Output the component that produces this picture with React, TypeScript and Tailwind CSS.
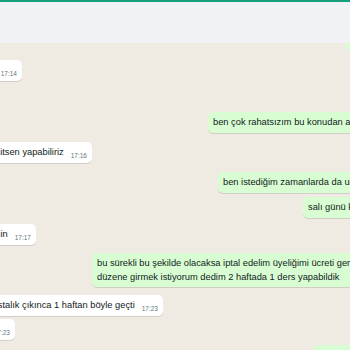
import React from "react";

const font = { fontFamily: '"Liberation Sans", Arial, sans-serif' };

function Time({ t }: { t: string }) {
  return (
    <span className="shrink-0 text-[6.5px] leading-[8px] text-[#667781] whitespace-nowrap">{t}</span>
  );
}

function In({ text, time, edge, mt }: { text?: string; time: string; edge: string; mt: string }) {
  return (
    <div className={`flex justify-end ${edge} ${mt}`}>
      <div className="flex shrink-0 items-end gap-[7px] whitespace-nowrap rounded-[5px] bg-white py-[3px] pl-[6px] pr-[5px] shadow-[0_1px_0.5px_rgba(11,20,26,0.13)]">
        {text ? <span className="text-[9.3px] leading-[15px] text-[#111b21]">{text}</span> : <span className="leading-[15px]">&nbsp;</span>}
        <Time t={time} />
      </div>
    </div>
  );
}

function Out({ lines, time, ml, mt }: { lines: string[]; time: string; ml: string; mt: string }) {
  return (
    <div className={`flex ${ml} ${mt}`}>
      <div className="flex shrink-0 items-end gap-[7px] whitespace-nowrap rounded-[5px] bg-[#d9fdd3] py-[3px] pl-[5px] pr-[5px] shadow-[0_1px_0.5px_rgba(11,20,26,0.13)]">
        <div className="flex flex-col text-[9.3px] text-[#111b21]">
          {lines.map((l, i) => (
            <span key={i} className={lines.length > 1 ? "leading-[14px]" : "leading-[15px]"}>
              {l}
            </span>
          ))}
        </div>
        <Time t={time} />
      </div>
    </div>
  );
}

export default function App() {
  return (
    <div className="relative flex h-[350px] w-[350px] flex-col overflow-hidden bg-[#efeae2]" style={font}>
      <div className="h-[2px] shrink-0 bg-[#14a17c]" />
      <div className="h-[41px] shrink-0 bg-[#f0f2f5]" />
      <div className="flex flex-1 flex-col bg-[#efeae2]">
        <div className="ml-[345px] h-[7px] w-[20px] rounded-bl-[5px] bg-[#d9fdd3]" />
        <In time="17:14" edge="w-[22px]" mt="mt-[10px]" />
        <Out lines={["ben çok rahatsızım bu konudan a"]} time="17:15" ml="ml-[208px]" mt="mt-[31px]" />
        <In text="aitsen yapabiliriz" time="17:16" edge="w-[92px]" mt="mt-[9px]" />
        <Out lines={["ben istediğim zamanlarda da ul"]} time="17:16" ml="ml-[218px]" mt="mt-[9px]" />
        <Out lines={["salı günü k"]} time="17:16" ml="ml-[303px]" mt="mt-[4px]" />
        <In text="çin" time="17:17" edge="w-[36px]" mt="mt-[6px]" />
        <Out
          lines={[
            "bu sürekli bu şekilde olacaksa iptal edelim üyeliğimi ücreti ger",
            "düzene girmek istiyorum dedim 2 haftada 1 ders yapabildik",
          ]}
          time="17:22"
          ml="ml-[92px]"
          mt="mt-[8px]"
        />
        <In text="stalık çıkınca 1 haftan böyle geçti" time="17:23" edge="w-[163px]" mt="mt-[8px]" />
        <In time="17:23" edge="w-[15px]" mt="mt-[3px]" />
        <div className="ml-[313px] mt-[5px] h-[30px] w-[60px] rounded-[5px] bg-[#d9fdd3]" />
      </div>
    </div>
  );
}
